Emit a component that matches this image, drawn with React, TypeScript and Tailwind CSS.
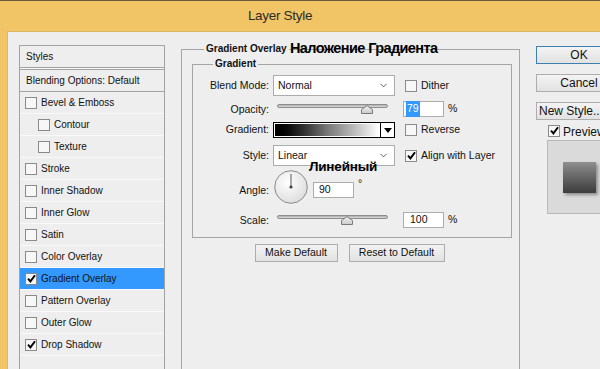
import React from 'react';
import { ChevronDown } from 'lucide-react';

const font = "font-['Liberation_Sans',Arial,sans-serif]";

const Check = ({ checked }: { checked?: boolean }) => (
    <span className="flex h-[12px] w-[12px] shrink-0 items-center justify-center border border-[#8a8a8a] bg-[#f7f7f7]">
        {checked && (
            <svg width="9" height="9" viewBox="0 0 9 9">
                <path d="M1 4.6 L3.4 7.4 L8 1.2" stroke="#000" strokeWidth="1.9" fill="none" />
            </svg>
        )}
    </span>
);

const styleRows: { label: string; checked?: boolean; sub?: boolean; active?: boolean }[] = [
    { label: 'Bevel & Emboss' },
    { label: 'Contour', sub: true },
    { label: 'Texture', sub: true },
    { label: 'Stroke' },
    { label: 'Inner Shadow' },
    { label: 'Inner Glow' },
    { label: 'Satin' },
    { label: 'Color Overlay' },
    { label: 'Gradient Overlay', checked: true, active: true },
    { label: 'Pattern Overlay' },
    { label: 'Outer Glow' },
    { label: 'Drop Shadow', checked: true },
];

const Thumb = () => (
    <svg width="12" height="9" viewBox="0 0 12 9">
        <defs>
            <linearGradient id="th" x1="0" y1="0" x2="0" y2="1">
                <stop offset="0" stopColor="#f4f4f4" />
                <stop offset="1" stopColor="#c8c8c8" />
            </linearGradient>
        </defs>
        <path d="M0.5 8.5 V4.5 L6 0.6 L11.5 4.5 V8.5 Z" fill="url(#th)" stroke="#7a7a7a" />
    </svg>
);

const Slider = ({ at, top }: { at: number; top: number }) => (
    <div className="relative h-full w-[122px] pl-[4px] pr-[7px]" style={{ paddingTop: top }}>
        <div className="relative h-[4px] rounded-full border border-[#8d8d8d] bg-gradient-to-b from-[#a9a9a9] to-[#e2e2e2]">
            <div className="absolute top-[0px]" style={{ left: at }}>
                <Thumb />
            </div>
        </div>
    </div>
);

const Label = ({ children, className = '' }: { children: React.ReactNode; className?: string }) => (
    <span className={`w-[76px] shrink-0 text-right ${className}`}>{children}</span>
);

const Field = ({ children, className = '' }: { children: React.ReactNode; className?: string }) => (
    <div className={`flex h-[16px] w-[41px] items-center border border-[#acacac] bg-white pl-[9px] ${className}`}>{children}</div>
);

const Select = ({ value }: { value: string }) => (
    <div className="flex h-[21px] w-[122px] items-center justify-between border border-[#acacac] bg-white pl-[4px] pr-[5px]">
        <span>{value}</span>
        <ChevronDown size={11} strokeWidth={2} className="text-[#555]" />
    </div>
);

const Btn = ({ children, className = '' }: { children: React.ReactNode; className?: string }) => (
    <div className={`flex items-center justify-center border border-[#adadad] bg-gradient-to-b from-[#f3f3f3] to-[#e2e2e2] ${className}`}>
        {children}
    </div>
);

export default function App() {
    return (
        <div className={`relative flex h-[369px] w-[600px] flex-col overflow-hidden border-t border-[#6a5a3c] bg-[#f1c466] text-[10.5px] text-[#111] ${font}`}>
            {/* Title bar */}
            <div className="flex h-[30px] shrink-0 items-center justify-center pr-[40px] text-[13.5px] tracking-[-0.3px] text-[#2b2b2b]">
                Layer Style
            </div>

            {/* Dialog body */}
            <div className="ml-[7px] flex flex-1 border-l border-t border-[#d9b867] bg-[#eeeeee] pl-[11px]">
                {/* Styles list */}
                <div className="mt-[13px] h-[340px] w-[146px] shrink-0 border border-[#a3a3a3] text-[10px]">
                    <div className="flex h-[22px] items-center border-b border-[#a3a3a3] pl-[6px]">Styles</div>
                    <div className="h-[1px] bg-[#f8f8f8]" />
                    <div className="flex h-[23px] items-center border-y border-[#a3a3a3] pl-[6px]">Blending Options: Default</div>
                    {styleRows.map((r) => (
                        <div
                            key={r.label}
                            className={`flex h-[22px] items-center gap-[4px] border-b border-[#f9f9f9] ${r.sub ? 'pl-[18px]' : 'pl-[5px]'} ${r.active ? 'bg-[#3399ff]' : ''}`}
                        >
                            <Check checked={r.checked} />
                            <span>{r.label}</span>
                        </div>
                    ))}
                </div>

                {/* Gradient Overlay settings */}
                <div className="ml-[16px] mt-[10px] flex w-[339px] shrink-0 flex-col">
                    <fieldset className="h-[340px] border border-[#a5a5a5]">
                        <legend className="ml-[22px] h-[14px] px-[2px] text-[10px] font-bold leading-[14px]">Gradient Overlay</legend>
                        <fieldset className="ml-[10px] mr-[7px] mt-[1px] border border-[#a5a5a5] pb-[7px]">
                            <legend className="ml-[20px] h-[14px] px-[2px] text-[10px] font-bold leading-[14px]">Gradient</legend>

                            <div className="mt-[4px] flex h-[21px] items-center">
                                <Label>Blend Mode:</Label>
                                <div className="ml-[4px]"><Select value="Normal" /></div>
                                <div className="ml-[10px] flex items-center gap-[4px]"><Check /><span>Dither</span></div>
                            </div>

                            <div className="mt-[2px] flex h-[22px] items-center">
                                <Label className="mt-[1px]">Opacity:</Label>
                                <div className="ml-[4px] h-full"><Slider at={83} top={6} /></div>
                                <Field className="ml-[8px] !pl-[2px] border-[#569de5]">
                                    <span className="bg-[#3399ff] px-[1px] text-white">79</span>
                                </Field>
                                <span className="ml-[4px]">%</span>
                            </div>

                            <div className="mt-[2px] flex h-[16px] items-center">
                                <Label>Gradient:</Label>
                                <div className="ml-[4px] flex h-[16px] w-[122px] border border-black bg-white">
                                    <div className="m-[1px] flex-1 bg-gradient-to-r from-black via-[#777] to-white" />
                                    <div className="flex w-[14px] items-center justify-center border-l border-black">
                                        <svg width="8" height="5" viewBox="0 0 8 5"><path d="M0 0 H8 L4 5 Z" fill="#000" /></svg>
                                    </div>
                                </div>
                                <div className="ml-[10px] flex items-center gap-[4px]"><Check /><span>Reverse</span></div>
                            </div>

                            <div className="mt-[7px] flex h-[21px] items-center">
                                <Label>Style:</Label>
                                <div className="ml-[4px]"><Select value="Linear" /></div>
                                <div className="ml-[10px] flex items-center gap-[4px]"><Check checked /><span>Align with Layer</span></div>
                            </div>

                            <div className="mt-[4px] flex h-[34px] items-center">
                                <Label className="mt-[8px]">Angle:</Label>
                                <svg className="ml-[5px]" width="34" height="34" viewBox="0 0 34 34">
                                    <defs>
                                        <radialGradient id="dial" cx="0.4" cy="0.35" r="0.7">
                                            <stop offset="0" stopColor="#ffffff" />
                                            <stop offset="1" stopColor="#dcdcdc" />
                                        </radialGradient>
                                    </defs>
                                    <circle cx="17" cy="17" r="16.3" fill="url(#dial)" stroke="#8a8a8a" />
                                    <line x1="17" y1="17" x2="17" y2="4" stroke="#5a5a5a" strokeWidth="1" />
                                    <circle cx="17" cy="17" r="1.6" fill="#444" />
                                </svg>
                                <Field className="ml-[5px] mt-[6px] !pl-[5px]">90</Field>
                                <span className="ml-[4px] mb-[6px] self-center">°</span>
                            </div>

                            <div className="mt-[6px] flex h-[20px] items-center">
                                <Label className="mt-[1px]">Scale:</Label>
                                <div className="ml-[4px] h-full"><Slider at={63} top={5} /></div>
                                <Field className="ml-[8px] !pl-[6px]">100</Field>
                                <span className="ml-[4px]">%</span>
                            </div>
                        </fieldset>

                        <div className="mt-[6px] flex justify-center gap-[11px] pr-[2px]">
                            <Btn className="h-[18px] w-[83px]">Make Default</Btn>
                            <Btn className="h-[18px] w-[96px]">Reset to Default</Btn>
                        </div>
                    </fieldset>
                </div>

                {/* Right column */}
                <div className="ml-[16px] flex w-[90px] shrink-0 flex-col">
                    <Btn className="mt-[14px] h-[18px] w-[86px] !border-[#3c7fb1] text-[12px]">OK</Btn>
                    <Btn className="mt-[10px] h-[18px] w-[86px] text-[12px]">Cancel</Btn>
                    <Btn className="mt-[10px] h-[18px] w-[86px] !justify-start whitespace-nowrap pl-[2px] text-[12px]">New Style...</Btn>
                    <div className="ml-[12px] mt-[4px] flex h-[13px] items-center gap-[3px] text-[12px]">
                        <Check checked />
                        <span className="mt-[3px]">Preview</span>
                    </div>
                    <div className="ml-[11px] mt-[3px] flex h-[74px] w-[70px] items-center border border-[#b8b8b8] bg-[#dadada] pl-[15px]">
                        <div className="h-[31px] w-[33px] bg-gradient-to-b from-[#8f8f8f] to-[#3d3d3d] shadow-[2px_2px_3px_rgba(0,0,0,0.35)]" />
                    </div>
                </div>
            </div>

            {/* Russian annotations laid over the dialog */}
            <span className="absolute left-[290px] top-[37px] text-[14.5px] font-bold tracking-[-0.6px] text-black">Наложение Градиента</span>
            <span className="absolute left-[309px] top-[156px] text-[13.5px] font-bold tracking-[-0.2px] text-black">Линейный</span>
        </div>
    );
}
